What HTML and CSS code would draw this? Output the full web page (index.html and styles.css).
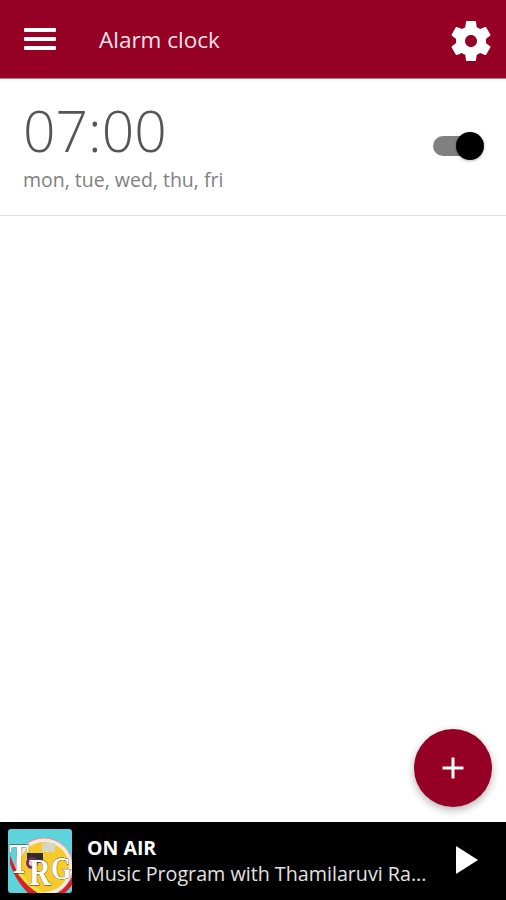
FILE: index.html
```html
<!DOCTYPE html>
<html lang="en">
<head>
  <meta charset="UTF-8">
  <meta name="viewport" content="width=device-width, initial-scale=1.0">
  <title>Alarm clock</title>
  <link rel="stylesheet" href="styles.css">
</head>
<body>
  <div class="app">
    <header class="toolbar">
      <button class="menu-btn" aria-label="Menu">
        <span></span><span></span><span></span>
      </button>
      <h1 class="toolbar-title">Alarm clock</h1>
      <svg class="gear" viewBox="0 0 24 24" width="48" height="48">
        <path fill="#fff" fill-rule="evenodd" d="M19.43 12.98c.04-.32.07-.64.07-.98s-.03-.66-.07-.98l2.11-1.65c.19-.15.24-.42.12-.64l-2-3.46c-.12-.22-.39-.3-.61-.22l-2.49 1c-.52-.4-1.08-.73-1.69-.98l-.38-2.65C14.46 2.18 14.25 2 14 2h-4c-.25 0-.46.18-.49.42l-.38 2.65c-.61.25-1.17.59-1.69.98l-2.49-1c-.23-.09-.49 0-.61.22l-2 3.46c-.13.22-.07.49.12.64l2.11 1.65c-.04.32-.07.65-.07.98s.03.66.07.98l-2.11 1.65c-.19.15-.24.42-.12.64l2 3.46c.12.22.39.3.61.22l2.49-1c.52.4 1.08.73 1.69.98l.38 2.65c.03.24.24.42.49.42h4c.25 0 .46-.18.49-.42l.38-2.65c.61-.25 1.17-.59 1.69-.98l2.49 1c.23.09.49 0 .61-.22l2-3.46c.12-.22.07-.49-.12-.64l-2.11-1.65zM12 15c-1.65 0-3-1.35-3-3s1.35-3 3-3 3 1.35 3 3-1.35 3-3 3z"/>
      </svg>
    </header>

    <main class="content">
      <div class="alarm">
        <div class="alarm-info">
          <div class="alarm-time">07:00</div>
          <div class="alarm-days">mon, tue, wed, thu, fri</div>
        </div>
        <div class="switch"><span class="switch-knob"></span></div>
      </div>

      <button class="fab" aria-label="Add alarm">
        <svg viewBox="0 0 24 24" width="24" height="24">
          <path fill="none" stroke="#fff" stroke-width="3" d="M12 1.5v21M1.5 12h21"/>
        </svg>
      </button>
    </main>

    <footer class="player">
      <svg class="logo" viewBox="0 0 64 64" width="64" height="64">
        <rect width="64" height="64" rx="3" fill="#5fd3dc"/>
        <circle cx="36" cy="38" r="29" fill="#f3e9e2" stroke="#e8908a" stroke-width="1"/>
        <circle cx="36" cy="38" r="25" fill="#f6c92c"/>
        <path d="M2 26 C8 44 18 56 30 64 L20 64 C10 54 4 42 2 34z" fill="#d8202a"/>
        <path d="M8 36 C14 48 24 58 38 64 L30 64 C20 58 12 48 8 42z" fill="#f6e23a"/>
        <path d="M50 64 C56 60 61 54 64 48 L64 56 C61 60 59 62 57 64z" fill="#d8202a"/>
        <rect x="34" y="14" width="13" height="9" fill="#d4d7c4"/>
        <rect x="19" y="24" width="16" height="10" fill="#2c2c30"/>
        <circle cx="24" cy="34" r="6" fill="#7a2c58"/>
        <circle cx="24" cy="34" r="3" fill="#e6e6ee"/>
        <text class="logo-t" transform="translate(1 44) scale(1 1.4)">T</text>
        <text class="logo-r" transform="translate(21 56) scale(1 1.27)">R</text>
        <text class="logo-g" transform="translate(43 50) scale(1 1.25)">G</text>
      </svg>
      <div class="player-text">
        <div class="player-status">ON AIR</div>
        <div class="player-title">Music Program with Thamilaruvi Ra...</div>
      </div>
      <svg class="play" viewBox="0 0 24 28" width="24" height="28">
        <path fill="#fff" d="M1 0l22 14L1 28z"/>
      </svg>
    </footer>
  </div>
</body>
</html>
```

FILE: styles.css
```css
html, body {
  margin: 0;
  padding: 0;
}

body {
  font-family: 'Open Sans', sans-serif;
  background-color: #fff;
  color: #666;
}

.app {
  display: flex;
  flex-direction: column;
  height: 900px;
  overflow: hidden;
}

.toolbar {
  display: flex;
  align-items: center;
  flex-shrink: 0;
  box-sizing: border-box;
  height: 79px;
  padding: 0 11px 0 24px;
  background-color: #960024;
  border-bottom: 1px solid #c8788c;
}

.menu-btn {
  display: flex;
  flex-direction: column;
  justify-content: space-between;
  width: 32px;
  height: 22px;
  margin: 0;
  padding: 0;
  background: none;
  border: none;
}

.menu-btn span {
  display: block;
  height: 4px;
  border-radius: 1px;
  background-color: #fff;
}

.toolbar-title {
  flex: 1;
  margin: 0 0 0 43px;
  font-size: 22.5px;
  font-weight: 400;
  color: #f6e4e8;
}

.gear {
  display: block;
  margin-top: 3px;
}

.content {
  position: relative;
  flex: 1;
}

.alarm {
  display: flex;
  align-items: center;
  justify-content: space-between;
  box-sizing: border-box;
  height: 137px;
  padding: 0 28px 0 23px;
  border-bottom: 1px solid #e0e0e0;
}

.alarm-time {
  margin-top: -4px;
  font-size: 57px;
  font-weight: 300;
  line-height: 66px;
  color: #555;
}

.alarm-days {
  margin-top: 4px;
  font-size: 19.5px;
  line-height: 26px;
  color: #808080;
}

.switch {
  position: relative;
  width: 45px;
  height: 20px;
  margin-top: -3px;
  border-radius: 10px;
  background-color: #808080;
}

.switch-knob {
  position: absolute;
  top: -4px;
  right: -6px;
  width: 28px;
  height: 28px;
  border-radius: 50%;
  background-color: #000;
  box-shadow: 0 1px 3px rgba(0, 0, 0, 0.3);
}

.fab {
  position: absolute;
  right: 14px;
  bottom: 15px;
  display: flex;
  align-items: center;
  justify-content: center;
  width: 78px;
  height: 78px;
  padding: 0;
  border: none;
  border-radius: 50%;
  background-color: #960024;
  box-shadow: 0 3px 8px rgba(0, 0, 0, 0.3);
}

.player {
  display: flex;
  align-items: center;
  flex-shrink: 0;
  height: 78px;
  padding: 0 27px 0 8px;
  background-color: #000;
}

.logo {
  display: block;
  flex-shrink: 0;
}

.logo text {
  font-family: 'Liberation Serif', serif;
  font-weight: 700;
  fill: #fff;
  stroke: #3a3a3a;
  stroke-width: 0.6px;
  paint-order: stroke;
}

.logo-t {
  font-size: 30px;
}

.logo-r {
  font-size: 30px;
}

.logo-g {
  font-size: 26px;
}

.player-text {
  flex: 1;
  margin-left: 15px;
  min-width: 0;
}

.player-status {
  font-size: 19.5px;
  font-weight: 700;
  line-height: 26px;
  color: #fff;
}

.player-title {
  font-size: 19.7px;
  line-height: 26px;
  color: #e2e2e2;
  white-space: nowrap;
}

.play {
  display: block;
  flex-shrink: 0;
  margin-top: -2px;
}
```
